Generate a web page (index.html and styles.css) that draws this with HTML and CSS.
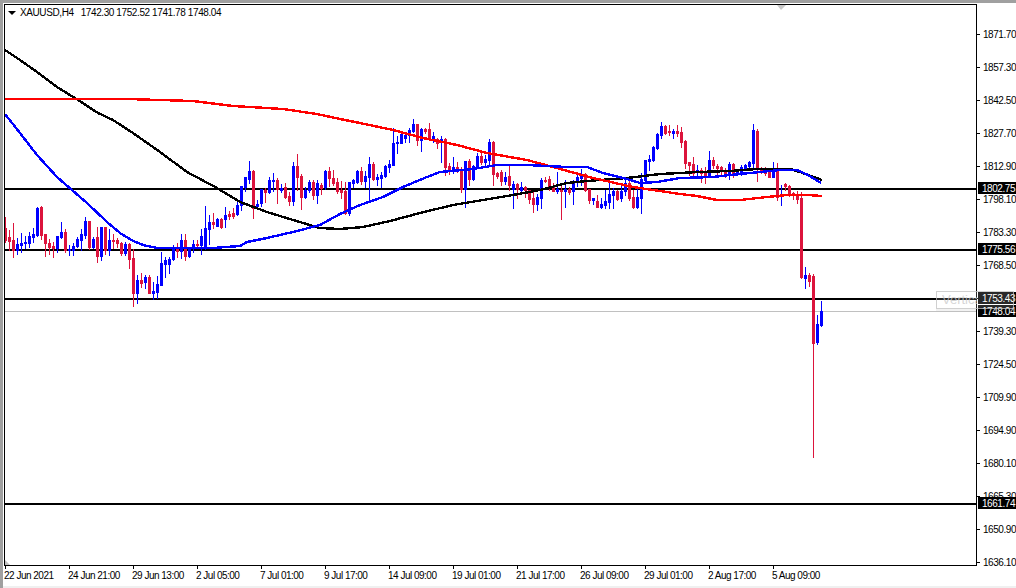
FILE: index.html
```html
<!DOCTYPE html>
<html lang="en">
<head>
<meta charset="utf-8">
<title>XAUUSD,H4</title>
<link rel="stylesheet" href="styles.css">
</head>
<body>
<div class="terminal">
  <div class="main">
    <div class="plot">
      <svg id="chart" class="chart" width="971" height="560" viewBox="5 5 971 560" xmlns="http://www.w3.org/2000/svg"></svg>
      <div class="title"><span class="title-arrow"></span><span class="title-symbol">XAUUSD,H4</span><span class="title-ohlc">1742.30 1752.52 1741.78 1748.04</span></div>
    </div>
    <div class="price-axis">
      <div class="price">1871.70</div>
      <div class="price">1857.30</div>
      <div class="price">1842.50</div>
      <div class="price">1827.70</div>
      <div class="price">1812.90</div>
      <div class="price">1798.10</div>
      <div class="price">1783.30</div>
      <div class="price">1768.50</div>
      <div class="price">1753.70</div>
      <div class="price">1739.30</div>
      <div class="price">1724.50</div>
      <div class="price">1709.90</div>
      <div class="price">1694.90</div>
      <div class="price">1680.10</div>
      <div class="price">1665.30</div>
      <div class="price">1650.90</div>
      <div class="price">1636.10</div>
      <div class="tag tag-a">1802.75</div>
      <div class="tag tag-b">1775.56</div>
      <div class="tag tag-c">1753.43</div>
      <div class="tag tag-d">1748.04</div>
      <div class="tag tag-e">1661.74</div>
    </div>
    <div class="ghost"><span class="ghost-text">Vertical</span></div>
  </div>
  <div class="time-axis">
    <div class="time">22 Jun 2021</div>
    <div class="time">24 Jun 21:00</div>
    <div class="time">29 Jun 13:00</div>
    <div class="time">2 Jul 05:00</div>
    <div class="time">7 Jul 01:00</div>
    <div class="time">9 Jul 17:00</div>
    <div class="time">14 Jul 09:00</div>
    <div class="time">19 Jul 01:00</div>
    <div class="time">21 Jul 17:00</div>
    <div class="time">26 Jul 09:00</div>
    <div class="time">29 Jul 01:00</div>
    <div class="time">2 Aug 17:00</div>
    <div class="time">5 Aug 09:00</div>
  </div>
  <div class="status-strip"></div>
</div>
<script src="chart.js"></script>
</body>
</html>
```
FILE: styles.css
```css
* { box-sizing: border-box; }
html, body { margin: 0; padding: 0; background: #fff; }
body {
  width: 1016px;
  height: 588px;
  overflow: hidden;
  font-family: "Liberation Sans", Arial, sans-serif;
  font-size: 10px;
  color: #000;
}
.terminal {
  width: 1016px;
  height: 588px;
  display: flex;
  flex-direction: column;
  border-top: 3px solid #a0a0a0;
  border-left: 3px solid #a0a0a0;
  padding: 1px 0 0 1px;
  background: #fff;
}
.main {
  position: relative;
  display: flex;
  height: 562px;
}
.plot {
  position: relative;
  width: 973px;
  height: 562px;
  border: 1px solid #000;
}
.chart { display: block; }
.title {
  position: absolute;
  left: 3px;
  top: 1px;
  display: flex;
  align-items: center;
  height: 13px;
  font-size: 10px;
  letter-spacing: -0.4px;
  white-space: nowrap;
}
.title-arrow {
  width: 0;
  height: 0;
  border-left: 4px solid transparent;
  border-right: 4px solid transparent;
  border-top: 4px solid #000;
  margin-right: 4px;
}
.title-symbol { margin-right: 7px; }
.price-axis {
  position: relative;
  width: 39px;
  height: 562px;
  padding-top: 14px;
  letter-spacing: -0.45px;
}
.price {
  position: relative;
  height: 33px;
  line-height: 33px;
  padding-left: 6px;
  white-space: nowrap;
}
.price::before {
  content: "";
  position: absolute;
  left: 0;
  top: 16px;
  width: 3px;
  height: 1px;
  background: #000;
}
.tag {
  position: absolute;
  left: 1px;
  width: 38px;
  height: 12px;
  line-height: 13px;
  padding-left: 4px;
  background: #000;
  color: #fff;
  white-space: nowrap;
}
.tag-a { top: 178px; }
.tag-b { top: 239px; }
.tag-c { top: 288px; }
.tag-d { top: 301px; }
.tag-e { top: 493px; }
.ghost {
  position: absolute;
  left: 932px;
  top: 287px;
  width: 78px;
  height: 18px;
  border: 1px solid rgba(192, 192, 192, 0.75);
  background: rgba(255, 255, 255, 0.16);
  box-shadow: 0 2px 0 rgba(0, 0, 0, 0.05);
  padding-left: 5px;
}
.ghost-text {
  display: block;
  width: 35px;
  overflow: hidden;
  color: rgba(200, 200, 200, 0.75);
  font-size: 13px;
  line-height: 16px;
  white-space: nowrap;
}
.time-axis {
  display: flex;
  height: 20px;
  padding-left: 1px;
  letter-spacing: -0.5px;
}
.time {
  position: relative;
  width: 64px;
  flex: none;
  line-height: 19px;
  text-indent: -1px;
  white-space: nowrap;
}
.time::before {
  content: "";
  position: absolute;
  left: 0;
  top: 0;
  width: 1px;
  height: 3px;
  background: #000;
}
.status-strip {
  flex: 1;
  margin-left: -1px;
  background: #f0f0f0;
}
```
FILE: chart.js
```js
var NS = "http://www.w3.org/2000/svg";
var svg = document.getElementById("chart");
var CANDLES = "r217,228,240,242 r230,237,241,250 r223,240,250,257 b238,244,250,254 b233,243,245,252 b236,242,243,248 b232,236,243,247 b228,234,237,242 b207,208,235,236 r206,207,235,239 r234,234,243,256 r239,243,247,254 r242,246,248,257 b236,236,248,252 b222,232,237,238 r229,232,250,252 b245,249,250,255 b243,246,250,255 b237,239,246,247 b229,234,240,250 b217,221,235,238 r221,221,247,249 b237,239,247,248 r227,237,256,262 b227,227,256,260 r227,227,250,254 b229,240,250,255 r234,240,241,248 r238,240,243,247 r242,243,253,255 b242,244,253,255 r243,244,259,268 r249,258,293,306 b275,280,293,303 r273,280,283,287 b275,277,282,288 r275,277,293,293 b282,291,293,299 b276,284,292,298 b252,263,285,285 b257,260,264,277 b257,259,264,273 " +
"b245,247,259,260 r243,247,251,257 b234,240,251,258 r234,240,256,260 b247,248,256,257 b240,244,248,252 r240,244,245,248 b229,236,245,254 b206,228,246,249 b215,222,229,244 r213,222,224,228 b218,219,226,226 r218,219,227,228 b207,215,219,227 r211,214,216,219 r208,213,216,218 b202,205,214,215 b186,186,205,210 b177,177,187,191 b161,171,179,183 r170,171,208,218 b200,204,206,208 b189,189,203,206 r188,190,192,202 b177,180,192,193 b173,180,181,191 r178,180,189,203 b184,188,190,192 r183,187,197,198 r192,196,201,205 b162,166,201,205 r154,166,177,190 r174,176,197,209 b187,190,197,198 b180,182,190,192 r180,182,195,199 b180,183,195,203 r183,185,188,194 b170,171,187,189 r167,171,178,186 r170,178,183,185 r178,182,191,193 " +
"r181,190,192,198 r182,191,213,214 b182,182,213,215 b179,180,183,187 b170,171,182,183 r167,171,181,184 b171,176,181,187 b157,164,177,199 r162,164,179,180 b174,177,179,185 b172,175,178,187 b165,166,176,177 b160,164,167,172 b128,143,165,165 b136,142,143,153 b132,134,143,143 b133,135,138,142 b128,130,135,142 b119,124,131,132 r124,124,140,145 b128,129,140,151 r128,129,131,133 r123,129,138,139 b132,136,139,142 r138,139,143,148 b136,139,142,162 r138,139,167,175 r163,166,171,174 b157,167,171,173 r162,167,170,172 r167,171,189,192 b161,161,189,207 r159,161,179,185 b165,166,179,180 b153,156,168,168 r152,156,162,164 b155,159,162,167 b139,142,160,164 r141,142,174,185 r172,173,176,178 r170,172,181,185 b172,177,181,184 r164,176,185,190 " +
"b181,184,189,208 r183,184,189,198 b182,187,190,192 r186,187,190,197 r190,190,199,203 r192,198,204,212 b194,197,204,210 b178,180,198,208 r177,180,181,182 r176,179,187,190 r183,186,191,191 b172,189,191,193 r184,190,191,219 b180,189,191,207 r187,189,192,194 b180,181,191,204 b172,177,181,186 b169,175,178,185 r173,174,190,191 r189,189,200,203 b198,198,200,204 r195,201,207,207 b198,204,207,208 b190,201,205,208 b183,194,202,208 b188,191,195,208 r190,191,199,200 b183,191,198,201 b180,183,191,195 r178,183,198,200 r190,197,207,208 b187,197,207,208 b173,179,198,213 b160,160,180,180 b155,159,161,170 b146,147,160,161 b133,134,148,149 b122,126,135,138 r125,126,133,134 r125,131,132,135 b129,131,133,138 r125,131,133,136 " +
"r127,132,142,147 r140,141,163,168 r162,162,165,175 r157,164,173,178 b165,170,172,177 r168,170,173,182 r167,172,176,183 b151,160,176,177 r157,160,165,168 r164,166,168,175 r166,167,171,175 r168,170,173,177 b162,164,173,179 r163,164,173,177 b170,172,173,175 b165,167,174,175 b164,165,168,170 b161,162,166,167 b124,130,163,167 r129,131,168,181 r167,168,170,173 r167,168,173,175 r170,172,177,177 b162,170,177,177 r163,170,197,200 b185,194,196,205 r183,184,186,190 r185,186,195,196 r192,193,195,199 r191,195,199,203 r192,198,277,278 b267,275,278,288 r273,275,281,286 r274,276,343,457 b315,324,342,344 b301,311,325,326";
var BLACK = "5,50 20,60 37,72 57,87 78,100 98,113 113,120 133,133 160,152 187,172 217,188 240,202 267,212 293,220 320,228 340,229 363,227 390,221 420,213 453,205 483,200 513,195 540,190 567,183 587,181 627,178 660,174 680,173 697,172 730,171 757,169 790,169 800,172 822,180";
var BLUE = "5,114 20,133 37,155 57,177 72,190 87,203 107,222 120,233 133,241 143,245 157,248 173,248 213,248 240,246 247,242 267,238 293,232 320,225 340,214 360,205 383,197 403,187 427,177 440,172 473,169 497,165 527,165 567,167 587,167 603,173 627,179 640,183 657,182 680,178 713,177 730,175 750,173 760,172 780,170 797,170 808,175 821,183";
var RED = "5,99 127,99 193,101 233,106 283,109 317,114 340,119 360,123 393,130 423,138 457,145 487,153 527,160 553,167 593,178 633,187 680,194 697,196 717,200 740,200 767,197 787,195 807,195 822,196";

function el(name, attrs) {
  var node = document.createElementNS(NS, name);
  for (var key in attrs) node.setAttribute(key, attrs[key]);
  svg.appendChild(node);
  return node;
}
function rect(x, y, w, h, fill) {
  el("rect", { x: x, y: y, width: w, height: h, fill: fill, "shape-rendering": "crispEdges" });
}
function line(points, color) {
  el("polyline", { points: points, fill: "none", stroke: color, "stroke-width": 2.4, "stroke-linejoin": "round", "shape-rendering": "crispEdges" });
}

rect(5, 311, 971, 1, "#c0c0c0");
[188, 249, 298, 503].forEach(function (y) { rect(5, y, 971, 2, "#000"); });

CANDLES.split(" ").forEach(function (item, i) {
  var color = item[0] === "r" ? "#dc143c" : "#0000ff";
  var v = item.slice(1).split(",").map(Number);
  var x = 5 + i * 4;
  rect(x, v[0], 1, v[3] - v[0] + 1, color);
  rect(x - 1, v[1], 3, v[2] - v[1] + 1, color);
});

line(BLACK, "#000");
line(RED, "#ff0000");
line(BLUE, "#0000ff");

el("polygon", { points: "777,5 786,5 781,10", fill: "#c8c8c8" });
el("polygon", { points: "5,560 10,565 5,565", fill: "#c0c0c0" });
```
